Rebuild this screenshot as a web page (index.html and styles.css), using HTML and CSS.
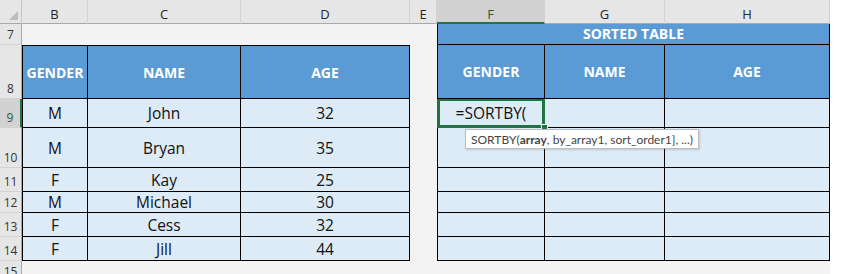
FILE: index.html
```html
<!DOCTYPE html>
<html lang="en">
<head>
    <meta charset="UTF-8">
    <title>SORTBY</title>
    <link rel="stylesheet" href="styles.css">
</head>
<body>

<div class="sheet">
    <!-- column headers -->
    <div class="corner"><span class="tri"></span></div>
    <div class="colhead">B</div>
    <div class="colhead">C</div>
    <div class="colhead">D</div>
    <div class="colhead">E</div>
    <div class="colhead sel">F</div>
    <div class="colhead">G</div>
    <div class="colhead">H</div>

    <!-- row 7 -->
    <div class="rowhead">7</div>
    <div class="blank"></div>
    <div class="blank"></div>
    <div class="blank"></div>
    <div class="blank"></div>
    <div class="title">SORTED TABLE</div>

    <!-- row 8 -->
    <div class="rowhead">8</div>
    <div class="th top left">GENDER</div>
    <div class="th top">NAME</div>
    <div class="th top">AGE</div>
    <div class="blank"></div>
    <div class="th left">GENDER</div>
    <div class="th">NAME</div>
    <div class="th">AGE</div>

    <!-- row 9 -->
    <div class="rowhead sel">9</div>
    <div class="td left">M</div>
    <div class="td">John</div>
    <div class="td">32</div>
    <div class="blank"></div>
    <div class="td left active">=SORTBY(<span class="handle"></span></div>
    <div class="td"></div>
    <div class="td"></div>

    <!-- row 10 -->
    <div class="rowhead">10</div>
    <div class="td left">M</div>
    <div class="td">Bryan</div>
    <div class="td">35</div>
    <div class="blank"></div>
    <div class="td left"></div>
    <div class="td"></div>
    <div class="td"></div>

    <!-- row 11 -->
    <div class="rowhead">11</div>
    <div class="td left">F</div>
    <div class="td">Kay</div>
    <div class="td">25</div>
    <div class="blank"></div>
    <div class="td left"></div>
    <div class="td"></div>
    <div class="td"></div>

    <!-- row 12 -->
    <div class="rowhead">12</div>
    <div class="td left">M</div>
    <div class="td">Michael</div>
    <div class="td">30</div>
    <div class="blank"></div>
    <div class="td left"></div>
    <div class="td"></div>
    <div class="td"></div>

    <!-- row 13 -->
    <div class="rowhead">13</div>
    <div class="td left">F</div>
    <div class="td">Cess</div>
    <div class="td">32</div>
    <div class="blank"></div>
    <div class="td left"></div>
    <div class="td"></div>
    <div class="td"></div>

    <!-- row 14 -->
    <div class="rowhead">14</div>
    <div class="td left">F</div>
    <div class="td">Jill</div>
    <div class="td">44</div>
    <div class="blank"></div>
    <div class="td left"></div>
    <div class="td"></div>
    <div class="td"></div>

    <!-- row 15 -->
    <div class="rowhead">15</div>
    <div class="blank"></div>
    <div class="blank"></div>
    <div class="blank"></div>
    <div class="blank"></div>
    <div class="blank"></div>
    <div class="blank"></div>
    <div class="blank"></div>

    <!-- formula tooltip -->
    <div class="tip">SORTBY(<b>array</b>, by_array1, sort_order1], ...)</div>
</div>

</body>
</html>
```

FILE: styles.css
```css
html, body{
    margin: 0;
    background: #ffffff;
    overflow: hidden;
}

.sheet{
    position: relative;
    width: 830px;
    display: grid;
    grid-template-columns: 22px 66px 153px 169px 27px 108px 120px 165px;
    grid-template-rows: 24px 21px 54px 29px 40px 24px 21px 24px 24px 21px;
    font-family: "Open Sans", "Noto Sans", sans-serif;
    color: #000000;
}

.sheet > div{
    box-sizing: border-box;
}

/* headers */
.corner{
    position: relative;
    background: #e6e6e6;
    border-right: 1px solid #c6c6c6;
    border-bottom: 1px solid #a9a9a9;
}

.tri{
    position: absolute;
    right: 3px;
    bottom: 3px;
    width: 0;
    height: 0;
    border-left: 9px solid transparent;
    border-bottom: 9px solid #bdbdbd;
}

.colhead{
    background: #e6e6e6;
    border-right: 1px solid #d2d2d2;
    border-bottom: 1px solid #a9a9a9;
    font-size: 13px;
    color: #262626;
    text-align: center;
    padding-top: 5px;
}

.colhead.sel{
    background: #d2d2d2;
    border-bottom: 2px solid #217346;
    color: #1e5b38;
}

.rowhead{
    background: #e6e6e6;
    border-right: 1px solid #a9a9a9;
    border-bottom: 1px solid #d2d2d2;
    font-size: 12px;
    color: #333333;
    text-align: center;
    display: flex;
    align-items: flex-end;
    justify-content: center;
    padding-bottom: 1px;
}

.rowhead.sel{
    background: #d2d2d2;
    border-right: 2px solid #217346;
    color: #1e5b38;
}

.blank{
    background: #f3f3f3;
}

/* tables */
.title{
    grid-column: span 3;
    background: #5b9bd5;
    color: #ffffff;
    font-weight: bold;
    font-size: 14px;
    text-align: center;
    border-left: 1px solid #000000;
    border-right: 1px solid #000000;
    border-bottom: 1px solid #000000;
}

.th, .td{
    display: flex;
    align-items: center;
    justify-content: center;
    border-right: 1px solid #000000;
    border-bottom: 1px solid #000000;
}

.th{
    background: #5b9bd5;
    color: #ffffff;
    font-weight: bold;
    font-size: 14px;
}

.td{
    background: #ddebf7;
    font-size: 15.5px;
    color: #111111;
}

.top{
    border-top: 1px solid #000000;
}

.left{
    border-left: 1px solid #000000;
}

.active{
    position: relative;
    box-shadow: inset 0 0 0 2px #217346;
    border-color: #217346;
}

.handle{
    position: absolute;
    right: -4px;
    bottom: -4px;
    width: 5px;
    height: 5px;
    background: #217346;
    border: 1px solid #ffffff;
}

.tip{
    position: absolute;
    left: 465px;
    top: 129px;
    height: 20px;
    padding: 0 5px;
    background: #ffffff;
    border: 1px solid #bcbcbc;
    box-shadow: 1px 1px 2px rgba(0, 0, 0, 0.15);
    font-family: Lato, sans-serif;
    font-size: 12px;
    line-height: 19px;
    color: #444444;
    white-space: nowrap;
}
```
